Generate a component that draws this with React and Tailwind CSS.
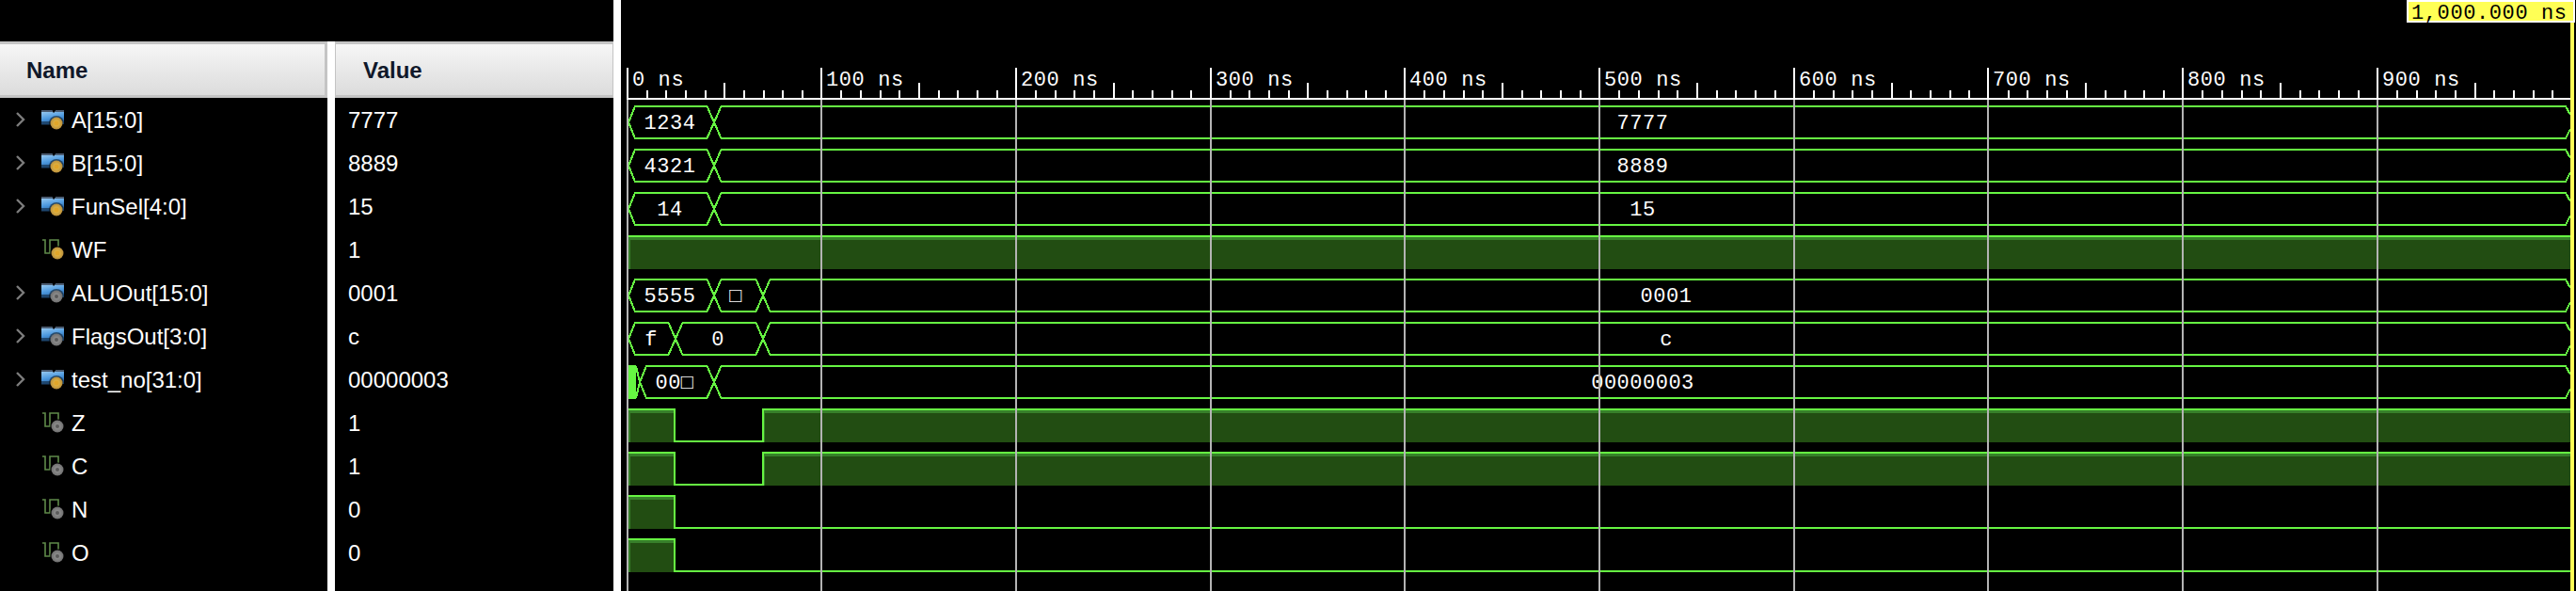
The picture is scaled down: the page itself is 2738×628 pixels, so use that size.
const GREEN = '#66f542'
const FILL = '#224d12'
const BAND = '#37802a'
const GRID = '#b4b4b4'
const END = 2732
const ROW_TOP = 113
const ROW_STEP = 46

const signals = [
  { name: 'A[15:0]', value: '7777', bus: true, dir: 'in' },
  { name: 'B[15:0]', value: '8889', bus: true, dir: 'in' },
  { name: 'FunSel[4:0]', value: '15', bus: true, dir: 'in' },
  { name: 'WF', value: '1', dir: 'in' },
  { name: 'ALUOut[15:0]', value: '0001', bus: true, dir: 'out' },
  { name: 'FlagsOut[3:0]', value: 'c', bus: true, dir: 'out' },
  { name: 'test_no[31:0]', value: '00000003', bus: true, dir: 'in' },
  { name: 'Z', value: '1', dir: 'out' },
  { name: 'C', value: '1', dir: 'out' },
  { name: 'N', value: '0', dir: 'out' },
  { name: 'O', value: '0', dir: 'out' },
]

// [start x, end x, label, label centre]
const waves = [
  { segs: [[668, 759, '1234', 712], [759, END, '7777', 1746]] },
  { segs: [[668, 759, '4321', 712], [759, END, '8889', 1746]] },
  { segs: [[668, 759, '14', 712], [759, END, '15', 1746]] },
  { bits: [[668, END, 1]] },
  { segs: [[668, 759, '5555', 712], [759, 811, '□', 782], [811, END, '0001', 1771]] },
  { segs: [[668, 718, 'f', 692], [718, 811, '0', 763], [811, END, 'c', 1771]] },
  { segs: [[680, 759, '00□', 717], [759, END, '00000003', 1746]], burst: true },
  { bits: [[668, 717, 1], [717, 811, 0], [811, END, 1]] },
  { bits: [[668, 717, 1], [717, 811, 0], [811, END, 1]] },
  { bits: [[668, 717, 1], [717, END, 0]] },
  { bits: [[668, 717, 1], [717, END, 0]] },
]

function SignalIcon({ bus, dir }) {
  const badge = dir === 'in' ? 'url(#badge-in)' : 'url(#badge-out)'
  const cx = bus ? 16 : 17
  return (
    <svg width="24" height="22" viewBox="0 0 24 22" className="shrink-0 blur-[0.5px]">
      {bus ? (
        <>
          <path d="M0 1h11l2 3 3-3h8v15H0z" fill="url(#bus-blue)" />
          <path d="M0 1h11l2 3 3-3h8v2H0z" fill="#4b5c72" />
          <path d="M0 13h12v4H0z" fill="#16324f" opacity="0.7" />
        </>
      ) : (
        <path d="M1 1H4V15H9V1H18V8" fill="none" stroke="#5f8a4a" strokeWidth="1.6" />
      )}
      <circle cx={cx} cy="15" r="8" fill="#000" opacity="0.5" />
      <circle cx={cx} cy="15" r="6.5" fill={badge} />
      <circle cx={cx} cy="15" r={dir === 'in' ? 2.5 : 2} fill={dir === 'in' ? '#e0a52a' : '#5a5a5a'} />
    </svg>
  )
}

function Chevron() {
  return (
    <svg width="10" height="16" viewBox="0 0 10 16" className="shrink-0">
      <path d="M1 1l7 7-7 7" fill="none" stroke="#7c7c7c" strokeWidth="2.4" />
    </svg>
  )
}

function BusWave({ wave, top }) {
  const bottom = top + 34
  const mid = top + 17
  const d = wave.segs
    .map(([x0, x1]) => {
      const first = x0 === wave.segs[0][0]
      const last = x1 === END
      const l = first ? x0 + 7 : x0 + 7.5
      const lm = x0
      const r = last ? x1 - 5 : x1 - 7.5
      if (last) {
        return `M${lm} ${mid}L${l} ${top}H${r}L${x1} ${top + 9}M${x1} ${bottom - 10}L${r} ${bottom}H${l}L${lm} ${mid}`
      }
      return `M${lm} ${mid}L${l} ${top}H${r}L${x1} ${mid}L${r} ${bottom}H${l}Z`
    })
    .join('')
  return (
    <g>
      {wave.burst && (
        <>
          <rect x="668" y={top - 1} width="8" height="36" fill={GREEN} />
          <path d={`M676 ${top}L680 ${mid}L676 ${bottom}`} fill="none" stroke={GREEN} strokeWidth="2" />
        </>
      )}
      <path d={d} fill="none" stroke={GREEN} strokeWidth="2" />
      {wave.segs.map(([, , label, cx]) => (
        <text key={label + cx} x={cx} y={top + 24} textAnchor="middle" className="fill-white font-['Liberation_Mono',monospace] text-[22px] tracking-[0.5px]">
          {label}
        </text>
      ))}
    </g>
  )
}

function BitWave({ wave, top }) {
  const bottom = top + 34
  let d = ''
  wave.bits.forEach(([x0, x1, level], i) => {
    const y = level ? top : bottom
    d += i === 0 ? `M${x0} ${y}H${x1}` : `V${y}H${x1}`
  })
  return (
    <g>
      {wave.bits.filter(b => b[2]).map(([x0, x1]) => (
        <g key={x0}>
          <rect x={x0} y={top} width={x1 - x0} height="35" fill={FILL} />
          <rect x={x0} y={top + 1} width={x1 - x0} height="3" fill={BAND} />
          <rect x={x0} y={top + 1} width="2" height="34" fill={BAND} />
        </g>
      ))}
      <path d={d} fill="none" stroke={GREEN} strokeWidth="2" />
    </g>
  )
}

function Waveform() {
  const majors = Array.from({ length: 10 }, (_, i) => Math.floor(667 + 206.7 * i))
  const ticks = Array.from({ length: 100 }, (_, k) => k).filter(k => k % 10 !== 0).map(k => ({
    x: Math.round(667 + 20.67 * k),
    tall: k % 10 === 5,
  }))
  return (
    <svg width="2072" height="628" viewBox="666 0 2072 628" shapeRendering="crispEdges" className="block">
      {/* ruler */}
      <rect x="666" y="104" width={END - 666} height="2" fill="#fff" />
      {ticks.map(t => (
        <rect key={t.x} x={t.x - 1} y={t.tall ? 88 : 96} width="2" height={t.tall ? 16 : 8} fill="#fff" />
      ))}
      {majors.map((x, i) => (
        <g key={x}>
          <rect x={x - 1} y="72" width="2" height="32" fill="#fff" />
          <text x={x + 5} y="91" className="fill-white font-['Liberation_Mono',monospace] text-[22px] tracking-[0.6px]">
            {i * 100} ns
          </text>
        </g>
      ))}

      {waves.map((w, i) => {
        const top = ROW_TOP + i * ROW_STEP
        return w.segs ? <BusWave key={i} wave={w} top={top} /> : <BitWave key={i} wave={w} top={top} />
      })}

      {/* grid lines sit over the traces */}
      {majors.map(x => (
        <rect key={x} x={x - 1} y="106" width="2" height="522" fill={GRID} />
      ))}

      {/* cursor */}
      <rect x="2732" y="24" width="4" height="604" fill="#ffff55" />
      <rect x="2559" y="1" width="177" height="22" fill="#ffff55" stroke="#fff" strokeWidth="2" />
      <text x="2563" y="20" className="fill-black font-['Liberation_Mono',monospace] text-[22px] tracking-[0.6px]">
        1,000.000 ns
      </text>
    </svg>
  )
}

function HeaderCell({ label, className }) {
  return (
    <div className={`h-[60px] flex items-center pt-[2px] border-y-[3px] border-[#c4c4c4] bg-gradient-to-b from-[#f6f6f6] to-[#dcdcdc] font-bold text-[24px] text-[#10182a] ${className}`}>
      {label}
    </div>
  )
}

export default function App() {
  return (
    <div className="w-[2738px] h-[628px] flex bg-black text-white overflow-hidden font-['Liberation_Sans',Arial,sans-serif]">
      <svg width="0" height="0" className="absolute">
        <defs>
          <linearGradient id="bus-blue" x1="0" y1="0" x2="0.3" y2="1">
            <stop offset="0" stopColor="#a8d4f4" />
            <stop offset="0.6" stopColor="#4f9be0" />
            <stop offset="1" stopColor="#2b6cb0" />
          </linearGradient>
          <radialGradient id="badge-in">
            <stop offset="0" stopColor="#f4c84a" />
            <stop offset="1" stopColor="#b98f3c" />
          </radialGradient>
          <radialGradient id="badge-out">
            <stop offset="0" stopColor="#9a9a9a" />
            <stop offset="1" stopColor="#707070" />
          </radialGradient>
        </defs>
      </svg>

      <div className="w-[652px] shrink-0 pt-[44px] flex">
        <div className="w-[356px] border-r-[8px] border-white">
          <HeaderCell label="Name" className="pl-[28px] border-r-[3px]" />
          {signals.map(s => (
            <div key={s.name} className="h-[46px] flex items-center pt-[2px] text-[24px] leading-none">
              <div className="w-[44px] pl-[17px] shrink-0 -mt-[2px]">{s.bus && <Chevron />}</div>
              <div className="-mt-[2px]">
                <SignalIcon bus={s.bus} dir={s.dir} />
              </div>
              <span className="ml-[8px] whitespace-nowrap">{s.name}</span>
            </div>
          ))}
        </div>
        <div className="flex-1">
          <HeaderCell label="Value" className="pl-[29px] border-x-[1px] border-x-[#c4c4c4]" />
          {signals.map(s => (
            <div key={s.name} className="h-[46px] flex items-center pt-[2px] pl-[14px] text-[24px] leading-none">
              {s.value}
            </div>
          ))}
        </div>
      </div>

      <div className="flex-1 border-l-[8px] border-white pl-[6px]">
        <Waveform />
      </div>
    </div>
  )
}
